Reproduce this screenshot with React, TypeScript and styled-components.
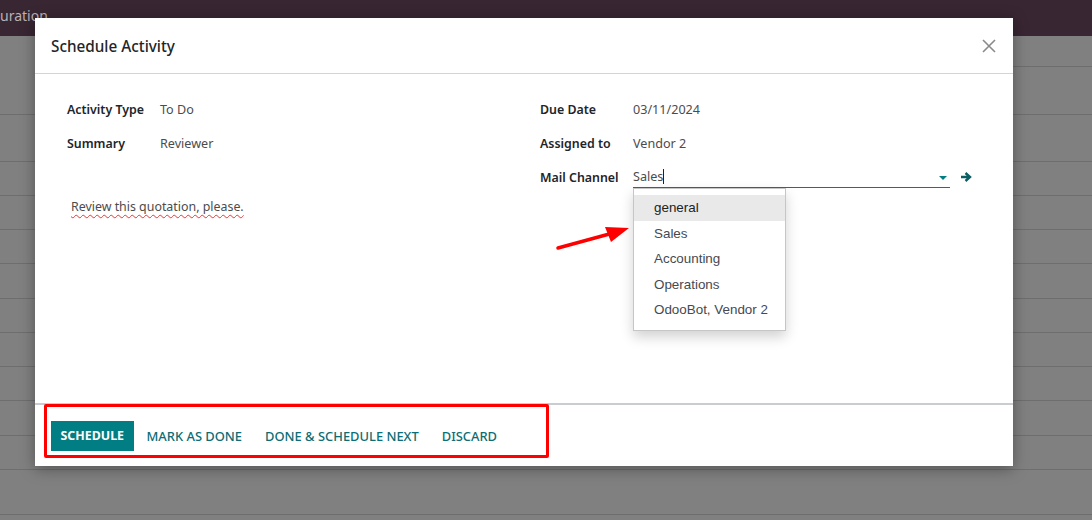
import React from "react";
import styled, { createGlobalStyle } from "styled-components";

const Global = createGlobalStyle`
  html, body { margin: 0; padding: 0; }
  body {
    width: 1092px; height: 520px; overflow: hidden;
    background: #808080;
    font-family: "Noto Sans", "Open Sans", sans-serif;
  }
`;

const Page = styled.div`
  position: relative;
  width: 1092px;
  height: 520px;
  overflow: hidden;
  background: #808080;
`;

const NavBar = styled.div`
  height: 36px;
  background: #382632;
  color: #b9b1b6;
  font-size: 14px;
  display: flex;
  align-items: flex-start;
  padding-top: 6px;
  box-sizing: border-box;
`;

const ControlPanel = styled.div`
  height: 31px;
  box-sizing: border-box;
  border-bottom: 1px solid #6e6e6e;
  margin-left: 1013px;
`;

const ListRow = styled.div<{ $h: number }>`
  height: ${(p) => p.$h}px;
  box-sizing: border-box;
  border-bottom: 1px solid #6e6e6e;
`;

const Modal = styled.div`
  position: absolute;
  left: 35px;
  top: 18px;
  width: 978px;
  height: 448px;
  background: #fff;
  box-shadow: 0 3px 14px rgba(0, 0, 0, 0.35);
  display: flex;
  flex-direction: column;
`;

const Header = styled.div`
  height: 56px;
  box-sizing: border-box;
  border-bottom: 1px solid #d4d4d4;
  display: flex;
  align-items: center;
  justify-content: space-between;
  padding: 0 14px 0 16px;
`;

const Title = styled.h4`
  margin: 0;
  font-size: 15.3px;
  font-weight: 500;
  color: #212529;
`;

const CloseBtn = styled.button`
  border: none;
  background: none;
  padding: 0;
  width: 20px;
  height: 20px;
  display: flex;
  align-items: center;
  justify-content: center;
`;

const Body = styled.div`
  flex: 1;
  position: relative;
  padding: 18px 32px 0 32px;
`;

const Groups = styled.div`
  display: grid;
  grid-template-columns: 473px 1fr;
`;

const Group = styled.div`
  display: flex;
  flex-direction: column;
`;

const Field = styled.div`
  display: grid;
  grid-template-columns: 93px 1fr;
  align-items: center;
  height: 34px;
`;

const Label = styled.label`
  font-size: 12.4px;
  font-weight: 600;
  color: #212529;
`;

const Value = styled.span`
  font-size: 12.6px;
  color: #4c4c4c;
`;

const InputWrap = styled.div`
  position: relative;
  display: flex;
  align-items: center;
  gap: 10px;
`;

const Input = styled.div`
  flex: 0 0 317px;
  height: 22px;
  box-sizing: border-box;
  border-bottom: 1px solid #017e84;
  display: flex;
  align-items: center;
  justify-content: space-between;
  font-size: 12.6px;
  color: #4c4c4c;
`;

const Caret = styled.span`
  width: 0;
  height: 0;
  border-left: 4px solid transparent;
  border-right: 4px solid transparent;
  border-top: 4px solid #017e84;
  margin-right: 3px;
  margin-top: 3px;
`;

const Cursor = styled.span`
  display: inline-block;
  width: 1px;
  height: 15px;
  background: #222;
  vertical-align: -3px;
`;

const Dropdown = styled.ul`
  position: absolute;
  left: 0;
  top: 22px;
  width: 153px;
  margin: 0;
  padding: 6px 0 7px;
  list-style: none;
  background: #fff;
  border: 1px solid #c6c6c6;
  box-sizing: border-box;
  box-shadow: 0 6px 12px rgba(0, 0, 0, 0.18);
  font-family: "Liberation Sans", Arial, sans-serif;
  font-size: 13.4px;
  color: #444a52;
  z-index: 2;
`;

const DropItem = styled.li<{ $active?: boolean }>`
  height: 25.5px;
  line-height: 25.5px;
  padding-left: 20px;
  background: ${(p) => (p.$active ? "#e9e9e9" : "transparent")};
  color: ${(p) => (p.$active ? "#222" : "#444a52")};
`;

const Note = styled.p`
  margin: 4px 0 0 4px;
  font-size: 12.4px;
  color: #4c4c4c;
  text-decoration: underline wavy #e33;
  text-decoration-thickness: 1px;
  text-underline-offset: 3px;
  text-decoration-skip-ink: none;
`;

const Footer = styled.div`
  height: 63px;
  box-sizing: border-box;
  border-top: 2px solid #c9ccd0;
  display: flex;
  align-items: center;
  gap: 3px;
  padding: 0 16px;
  position: relative;
`;

const Btn = styled.button<{ $primary?: boolean }>`
  height: 30px;
  padding: 0 ${(p) => (p.$primary ? 9.5 : 10)}px;
  border: none;
  font-family: inherit;
  font-size: ${(p) => (p.$primary ? 12.4 : 12.9)}px;
  font-weight: ${(p) => (p.$primary ? 700 : 500)};
  text-transform: uppercase;
  background: ${(p) => (p.$primary ? "#017e84" : "transparent")};
  color: ${(p) => (p.$primary ? "#fff" : "#0c6d74")};
`;

const Highlight = styled.div`
  position: absolute;
  left: 9px;
  top: -1px;
  width: 505px;
  height: 54px;
  box-sizing: border-box;
  border: 3px solid #ff0000;
  border-radius: 2px;
  pointer-events: none;
`;

const ArrowMark = styled.svg`
  position: absolute;
  left: 553px;
  top: 220px;
  overflow: visible;
`;

const rowHeights = [48, 47, 34, 34, 34, 35, 34, 34, 34, 35, 34, 45];

export default function App() {
  return (
    <>
      <Global />
      <Page>
        <NavBar>uration</NavBar>
        <ControlPanel />
        {rowHeights.map((h, i) => (
          <ListRow key={i} $h={h} />
        ))}
        <Modal>
          <Header>
            <Title>Schedule Activity</Title>
            <CloseBtn aria-label="Close">
              <svg width="14" height="14" viewBox="0 0 14 14">
                <path d="M1 1 L13 13 M13 1 L1 13" stroke="#8a8a8a" strokeWidth="1.6" />
              </svg>
            </CloseBtn>
          </Header>
          <Body>
            <Groups>
              <Group>
                <Field>
                  <Label>Activity Type</Label>
                  <Value>To Do</Value>
                </Field>
                <Field>
                  <Label>Summary</Label>
                  <Value>Reviewer</Value>
                </Field>
              </Group>
              <Group>
                <Field>
                  <Label>Due Date</Label>
                  <Value>03/11/2024</Value>
                </Field>
                <Field>
                  <Label>Assigned to</Label>
                  <Value>Vendor 2</Value>
                </Field>
                <Field>
                  <Label>Mail Channel</Label>
                  <InputWrap>
                    <Input>
                      <span>
                        Sales<Cursor />
                      </span>
                      <Caret />
                    </Input>
                    <svg width="12" height="12" viewBox="0 0 12 12">
                      <path d="M1 6 H9 M5.5 2 L10 6 L5.5 10" stroke="#0b5e63" strokeWidth="2.4" fill="none" />
                    </svg>
                    <Dropdown>
                      <DropItem $active>general</DropItem>
                      <DropItem>Sales</DropItem>
                      <DropItem>Accounting</DropItem>
                      <DropItem>Operations</DropItem>
                      <DropItem>OdooBot, Vendor 2</DropItem>
                    </Dropdown>
                  </InputWrap>
                </Field>
              </Group>
            </Groups>
            <Note>Review this quotation, please.</Note>
          </Body>
          <Footer>
            <Btn $primary>Schedule</Btn>
            <Btn>Mark as Done</Btn>
            <Btn>Done &amp; Schedule Next</Btn>
            <Btn>Discard</Btn>
            <Highlight />
          </Footer>
        </Modal>
        <ArrowMark width="80" height="40">
          <path d="M5 28 L60 13" stroke="#ff0000" strokeWidth="3.5" strokeLinecap="round" />
          <path d="M52 7 L76 8 L58 22 Z" fill="#ff0000" />
        </ArrowMark>
      </Page>
    </>
  );
}
